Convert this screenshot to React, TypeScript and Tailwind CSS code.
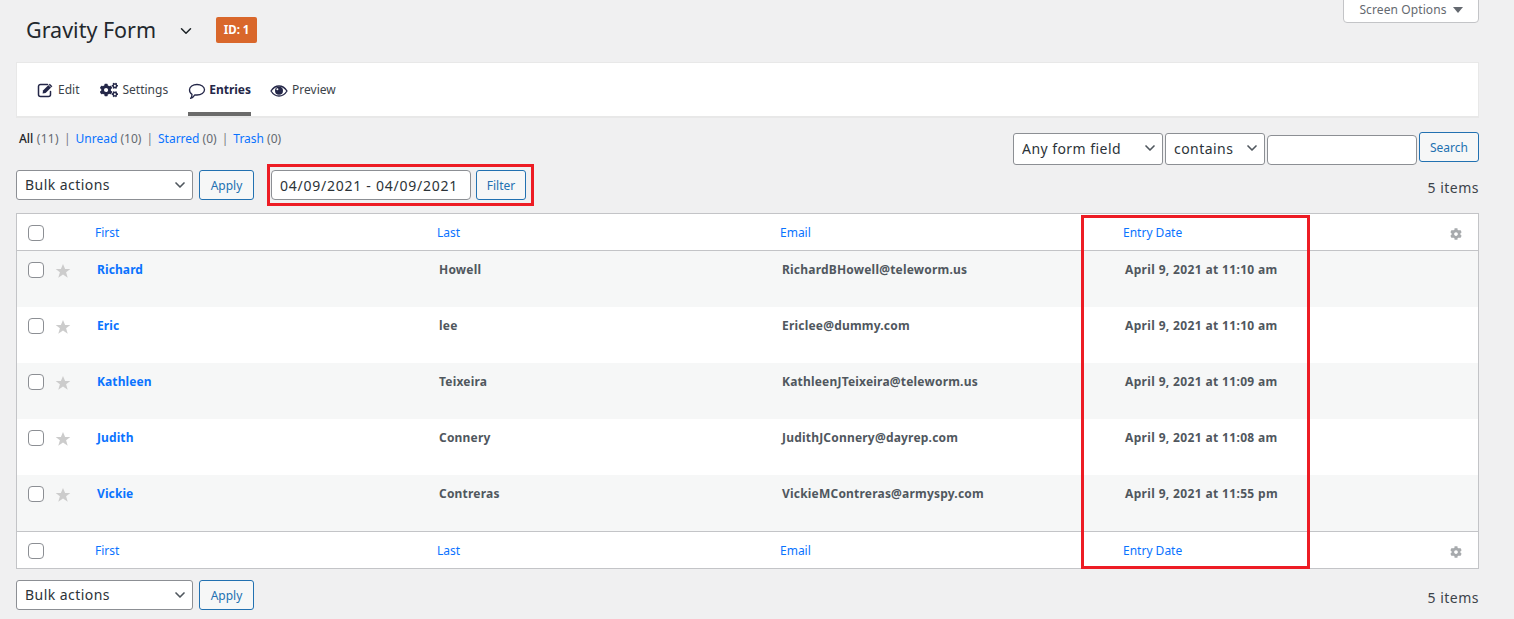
import React from "react";
import { ChevronDown } from "lucide-react";
import { FaCogs, FaCog } from "react-icons/fa";

const rows = [
  ["Richard", "Howell", "RichardBHowell@teleworm.us", "April 9, 2021 at 11:10 am"],
  ["Eric", "lee", "Ericlee@dummy.com", "April 9, 2021 at 11:10 am"],
  ["Kathleen", "Teixeira", "KathleenJTeixeira@teleworm.us", "April 9, 2021 at 11:09 am"],
  ["Judith", "Connery", "JudithJConnery@dayrep.com", "April 9, 2021 at 11:08 am"],
  ["Vickie", "Contreras", "VickieMContreras@armyspy.com", "April 9, 2021 at 11:55 pm"],
];

function EditIcon() {
  return (
    <svg viewBox="0 0 17 16" className="w-[17px] h-[16px] text-[#242748]" fill="none">
      <path d="M13.5 9.5v3a2 2 0 0 1-2 2h-8a2 2 0 0 1-2-2v-8a2 2 0 0 1 2-2h7" stroke="currentColor" strokeWidth="1.5" strokeLinecap="round" />
      <path d="M6 8.5 12.8 1.7l2.6 2.6-6.8 6.8-3 .5z" fill="currentColor" />
      <path d="M11.6 3l2.5 2.5" stroke="#fff" strokeWidth="0.7" />
    </svg>
  );
}

function CommentIcon() {
  return (
    <svg viewBox="0 0 18 17" className="w-[18px] h-[17px] mt-[3px] text-[#242748]" fill="none">
      <path d="M9 1.5c4.2 0 7.5 2.3 7.5 5.2S13.2 12 9 12c-.8 0-1.5-.1-2.2-.2C5.8 13.4 4.2 15 2.6 15.400c.8-1 1.400-2.300 1.400-4C2.300 10.400 1.500 8.700 1.500 6.700 1.500 3.800 4.800 1.500 9 1.500z" stroke="currentColor" strokeWidth="1.3" strokeLinejoin="round" />
    </svg>
  );
}

function EyeIcon() {
  return (
    <svg viewBox="0 0 18 12" className="w-[18px] h-[12px] mt-[2px] text-[#242748]" fill="none">
      <path d="M1 6c2-3.200 4.800-5 8-5s6 1.800 8 5c-2 3.200-4.800 5-8 5S3 9.200 1 6z" stroke="currentColor" strokeWidth="1.300" />
      <circle cx="9" cy="5.800" r="4" fill="currentColor" />
      <circle cx="7.400" cy="4.200" r="1" fill="#fff" />
    </svg>
  );
}

function Star() {
  return (
    <svg viewBox="0 0 16 16" className="w-4 h-4 text-[#cccccc]">
      <path d="M8 1l2.100 5h5.200l-4.200 3.300 1.600 5.400L8 11.500l-4.700 3.200 1.600-5.400L.7 6h5.200z" fill="currentColor" />
    </svg>
  );
}

function Select({ label, w, h = "h-[30px]" }: { label: string; w: string; h?: string }) {
  return (
    <div className={`relative ${w} ${h} shrink-0`}>
      <select className="w-full h-full appearance-none bg-white border border-[#8c8f94] rounded-[3px] pl-2 pr-6 pb-[2px] text-[14px] tracking-[0.45px] text-[#2c3338]">
        <option>{label}</option>
      </select>
      <ChevronDown className="absolute right-[5px] top-[7px] w-4 h-4 text-[#50575e] pointer-events-none" strokeWidth={2.5} />
    </div>
  );
}

function Button({ label, w, h = "h-[30px]" }: { label: string; w: string; h?: string }) {
  return (
    <button className={`${w} ${h} shrink-0 pt-[2px] bg-[#f6f7f7] border border-[#2271b1] rounded-[3px] text-[12px] text-[#2271b1]`}>
      {label}
    </button>
  );
}

function Check() {
  return <input type="checkbox" className="appearance-none block w-4 h-4 bg-white border border-[#8c8f94] rounded-[4px]" />;
}

function HeadRow({ bottom }: { bottom?: boolean }) {
  const cls = "text-[12px] pt-[2px] text-[#0a73ff] font-normal text-left pl-[5.5px] align-middle";
  return (
    <tr className={`h-[37px] ${bottom ? "border-t" : "border-b"} border-[#c3c4c7]`}>
      <th className="pl-[11px] pt-[2px]"><Check /></th>
      <th className={cls}>First</th>
      <th className={cls}>Last</th>
      <th className={cls}>Email</th>
      <th className={cls}>Entry Date</th>
      <th className="text-right pr-[16px] pt-[2px]"><FaCog className="inline-block w-3 h-3 text-[#a7aaad] -mt-px" /></th>
    </tr>
  );
}

function Tab({ icon, label, active, gap, ml }: { icon: React.ReactNode; label: string; active?: boolean; gap: string; ml: string }) {
  return (
    <div className={`relative flex items-center h-full ${ml} ${gap} text-[12px] ${active ? "font-bold text-[#242748]" : "text-[#3c434a]"}`}>
      {icon}
      <span>{label}</span>
      {active && <div className="absolute left-0 right-0 bottom-0 h-1 bg-[#6b6b6b]" />}
    </div>
  );
}

function Sep() {
  return <span className="text-[#787c82] mx-[5px]">|</span>;
}

export default function App() {
  return (
    <div className="w-[1514px] h-[619px] overflow-hidden bg-[#f0f0f1] pl-4 pr-[35px] font-['Noto_Sans','Open_Sans',sans-serif] text-[#3c434a]">
      <div className="flex justify-between h-[62px]">
        <div className="flex items-center h-[59px] pl-[10px]">
          <h1 className="text-[21.5px] leading-none text-[#23282d] font-normal">Gravity Form</h1>
          <ChevronDown className="ml-[21px] mt-[3px] w-[18px] h-[18px] text-[#1d2327]" strokeWidth={2} />
          <span className="ml-[21px] h-[26px] w-[41px] flex items-center justify-center rounded-[2px] bg-[#d9672b] text-white text-[11.5px] font-bold">ID: 1</span>
        </div>
        <div className="w-[136px] h-[24px] -mt-px pb-[3px] bg-white border border-[#c3c4c7] rounded-b-[4px] flex items-center justify-center gap-[6px] text-[12px] tracking-[0.1px] text-[#646970]">
          Screen Options
          <svg viewBox="0 0 10 6" className="w-[10px] h-[6px] text-[#646970]"><path d="M0 0h10L5 6z" fill="currentColor" /></svg>
        </div>
      </div>

      <div className="h-[56px] bg-white border border-[#e8e8e8] border-b-2 flex items-stretch pl-5">
        <Tab ml="" gap="gap-[4px]" icon={<EditIcon />} label="Edit" />
        <Tab ml="ml-[21px]" gap="gap-[4px]" icon={<FaCogs className="w-[18px] h-[18px] text-[#242748]" />} label="Settings" />
        <Tab ml="ml-[20px]" gap="gap-[3px]" active icon={<CommentIcon />} label="Entries" />
        <Tab ml="ml-[19px]" gap="gap-[4px]" icon={<EyeIcon />} label="Preview" />
      </div>

      <div className="flex justify-between">
        <div>
          <div className="mt-[12px] h-[17px] pl-[3px] flex items-center text-[12px] text-[#646970]">
            <span className="font-medium text-[#1d2327]">All</span>
            <span className="tracking-[0.3px]">&nbsp;(11)</span><Sep />
            <span className="text-[#0a73ff]">Unread</span>&nbsp;(10)<Sep />
            <span className="text-[#0a73ff]">Starred</span>&nbsp;(0)<Sep />
            <span className="text-[#0a73ff]">Trash</span>&nbsp;(0)
          </div>
          <div className="mt-[23px] flex items-center h-[30px]">
            <Select label="Bulk actions" w="w-[177px]" />
            <div className="ml-[6px]"><Button label="Apply" w="w-[55px]" /></div>
            <div className="ml-[13px] border-[3px] border-[#ed1c24] h-[42px] flex items-center pl-[1px] pr-[5px] gap-[5px]">
              <input readOnly value="04/09/2021 - 04/09/2021" className="w-[200px] h-[30px] bg-white border border-[#8c8f94] rounded-[4px] pl-2 text-[14px] tracking-[0.75px] text-[#2c3338]" />
              <Button label="Filter" w="w-[50px]" />
            </div>
          </div>
        </div>
        <div className="flex flex-col items-end">
          <div className="mt-[14px] flex items-start gap-[2px]">
            <div className="mt-px"><Select label="Any form field" w="w-[150px]" h="h-[32px]" /></div>
            <div className="mt-px"><Select label="contains" w="w-[100px]" h="h-[32px]" /></div>
            <input className="mt-[3px] w-[150px] h-[30px] bg-white border border-[#8c8f94] rounded-[4px]" />
            <Button label="Search" w="w-[60px]" />
          </div>
          <div className="mt-[12px] text-[14px] tracking-[0.5px] text-[#3c434a]">5 items</div>
        </div>
      </div>

      <div className="relative mt-[13px]">
        <table className="w-full table-fixed border-collapse bg-white border border-[#c3c4c7]">
          <colgroup>
            <col className="w-[73px]" />
            <col className="w-[342px]" />
            <col className="w-[343px]" />
            <col className="w-[343px]" />
            <col className="w-[300px]" />
            <col />
          </colgroup>
          <thead><HeadRow /></thead>
          <tbody>
            {rows.map((r, i) => (
              <tr key={r[0]} className={`${i === 4 ? "h-[57px]" : "h-[56px]"} align-top ${i % 2 === 0 ? "bg-[#f6f7f7]" : "bg-white"}`}>
                <td className="pl-[11px] pt-[11px]">
                  <div className="flex items-start gap-[11px]">
                    <Check />
                    <div className="mt-[1px]"><Star /></div>
                  </div>
                </td>
                <td className="pl-[7.5px] pt-[10px] text-[12px] font-bold tracking-[0.1px] text-[#0a73ff]">{r[0]}</td>
                <td className="pl-[7.5px] pt-[10px] text-[12px] font-bold tracking-[0.2px] text-[#50575e]">{r[1]}</td>
                <td className="pl-[7.5px] pt-[10px] text-[12px] font-bold tracking-[0.2px] text-[#50575e]">{r[2]}</td>
                <td className="pl-[7.5px] pt-[10px] text-[12px] font-bold tracking-[0.35px] text-[#50575e]">{r[3]}</td>
                <td />
              </tr>
            ))}
          </tbody>
          <tfoot><HeadRow bottom /></tfoot>
        </table>
        <div className="absolute left-[1065px] top-[2px] w-[229px] h-[354px] border-[3px] border-[#ed1c24] pointer-events-none" />
      </div>

      <div className="mt-[11px] flex items-center justify-between h-[30px]">
        <div className="flex items-center gap-[6px]">
          <Select label="Bulk actions" w="w-[177px]" />
          <Button label="Apply" w="w-[55px]" />
        </div>
        <div className="text-[14px] tracking-[0.5px] mt-[4px] text-[#3c434a]">5 items</div>
      </div>
    </div>
  );
}
